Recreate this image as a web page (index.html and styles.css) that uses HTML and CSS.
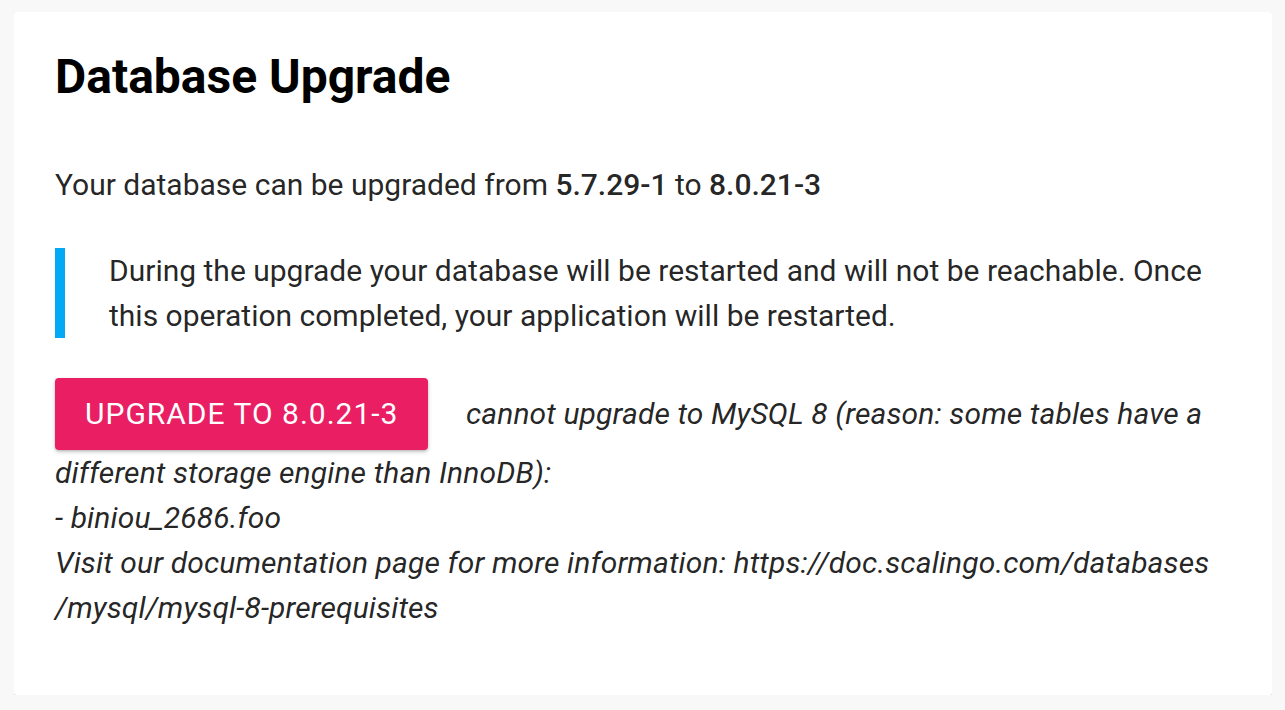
FILE: index.html
```html
<!DOCTYPE html>
<html lang="en">
<head>
  <meta charset="UTF-8">
  <title>Database Upgrade</title>
  <link rel="stylesheet" href="styles.css">
</head>
<body>
  <div class="card">
    <h4 class="titulo">Database Upgrade</h4>
    <p>Your database can be upgraded from <strong>5.7.29-1</strong> to <strong>8.0.21-3</strong></p>
    <blockquote>
      During the upgrade your database will be restarted and will not be reachable. Once this operation completed, your application will be restarted.
    </blockquote>
    <div class="acoes">
      <button class="btn">Upgrade to 8.0.21-3</button>
      <em>cannot upgrade to MySQL 8 (reason: some tables have a different storage engine than InnoDB):<br>- biniou_2686.foo<br>Visit our documentation page for more information: https://doc.scalingo.com/databases<wbr>/mysql/mysql-8-prerequisites</em>
    </div>
  </div>
</body>
</html>
```

FILE: styles.css
```css
body {
  background-color: #f8f8f8;
  font-family: Roboto, "Liberation Sans", sans-serif;
  color: rgba(0, 0, 0, 0.87);
  margin: 12px 13px 0 14px;
}

.card {
  background-color: white;
  padding: 37px 41px 65px 41px;
  box-shadow: 0 2px 4px rgba(0, 0, 0, 0.3), 0 0 8px rgba(0, 0, 0, 0.06);
  border-radius: 2px;
}

.titulo {
  font-size: 48px;
  line-height: 56px;
  font-weight: 700;
  color: #000;
  margin: 0;
}

p {
  font-size: 30px;
  line-height: 45px;
  margin: 57px 0 0 0;
}

strong {
  font-weight: 500;
}

blockquote {
  font-size: 30px;
  line-height: 45px;
  margin: 41px 0 0 0;
  padding-left: 44px;
  border-left: 10px solid #03a9f4;
}

.acoes {
  margin-top: 40px;
  font-size: 30px;
  line-height: 45px;
}

.acoes em {
  letter-spacing: 0.12px;
}

.btn {
  display: inline-block;
  background-color: #e91e63;
  color: white;
  border: none;
  border-radius: 4px;
  height: 72px;
  line-height: 72px;
  padding: 0 30px;
  margin-right: 30px;
  font-family: inherit;
  font-size: 30px;
  letter-spacing: 1px;
  text-transform: uppercase;
  vertical-align: baseline;
  box-shadow: 0 2px 4px rgba(0, 0, 0, 0.2), 0 1px 2px rgba(0, 0, 0, 0.12);
}
```
